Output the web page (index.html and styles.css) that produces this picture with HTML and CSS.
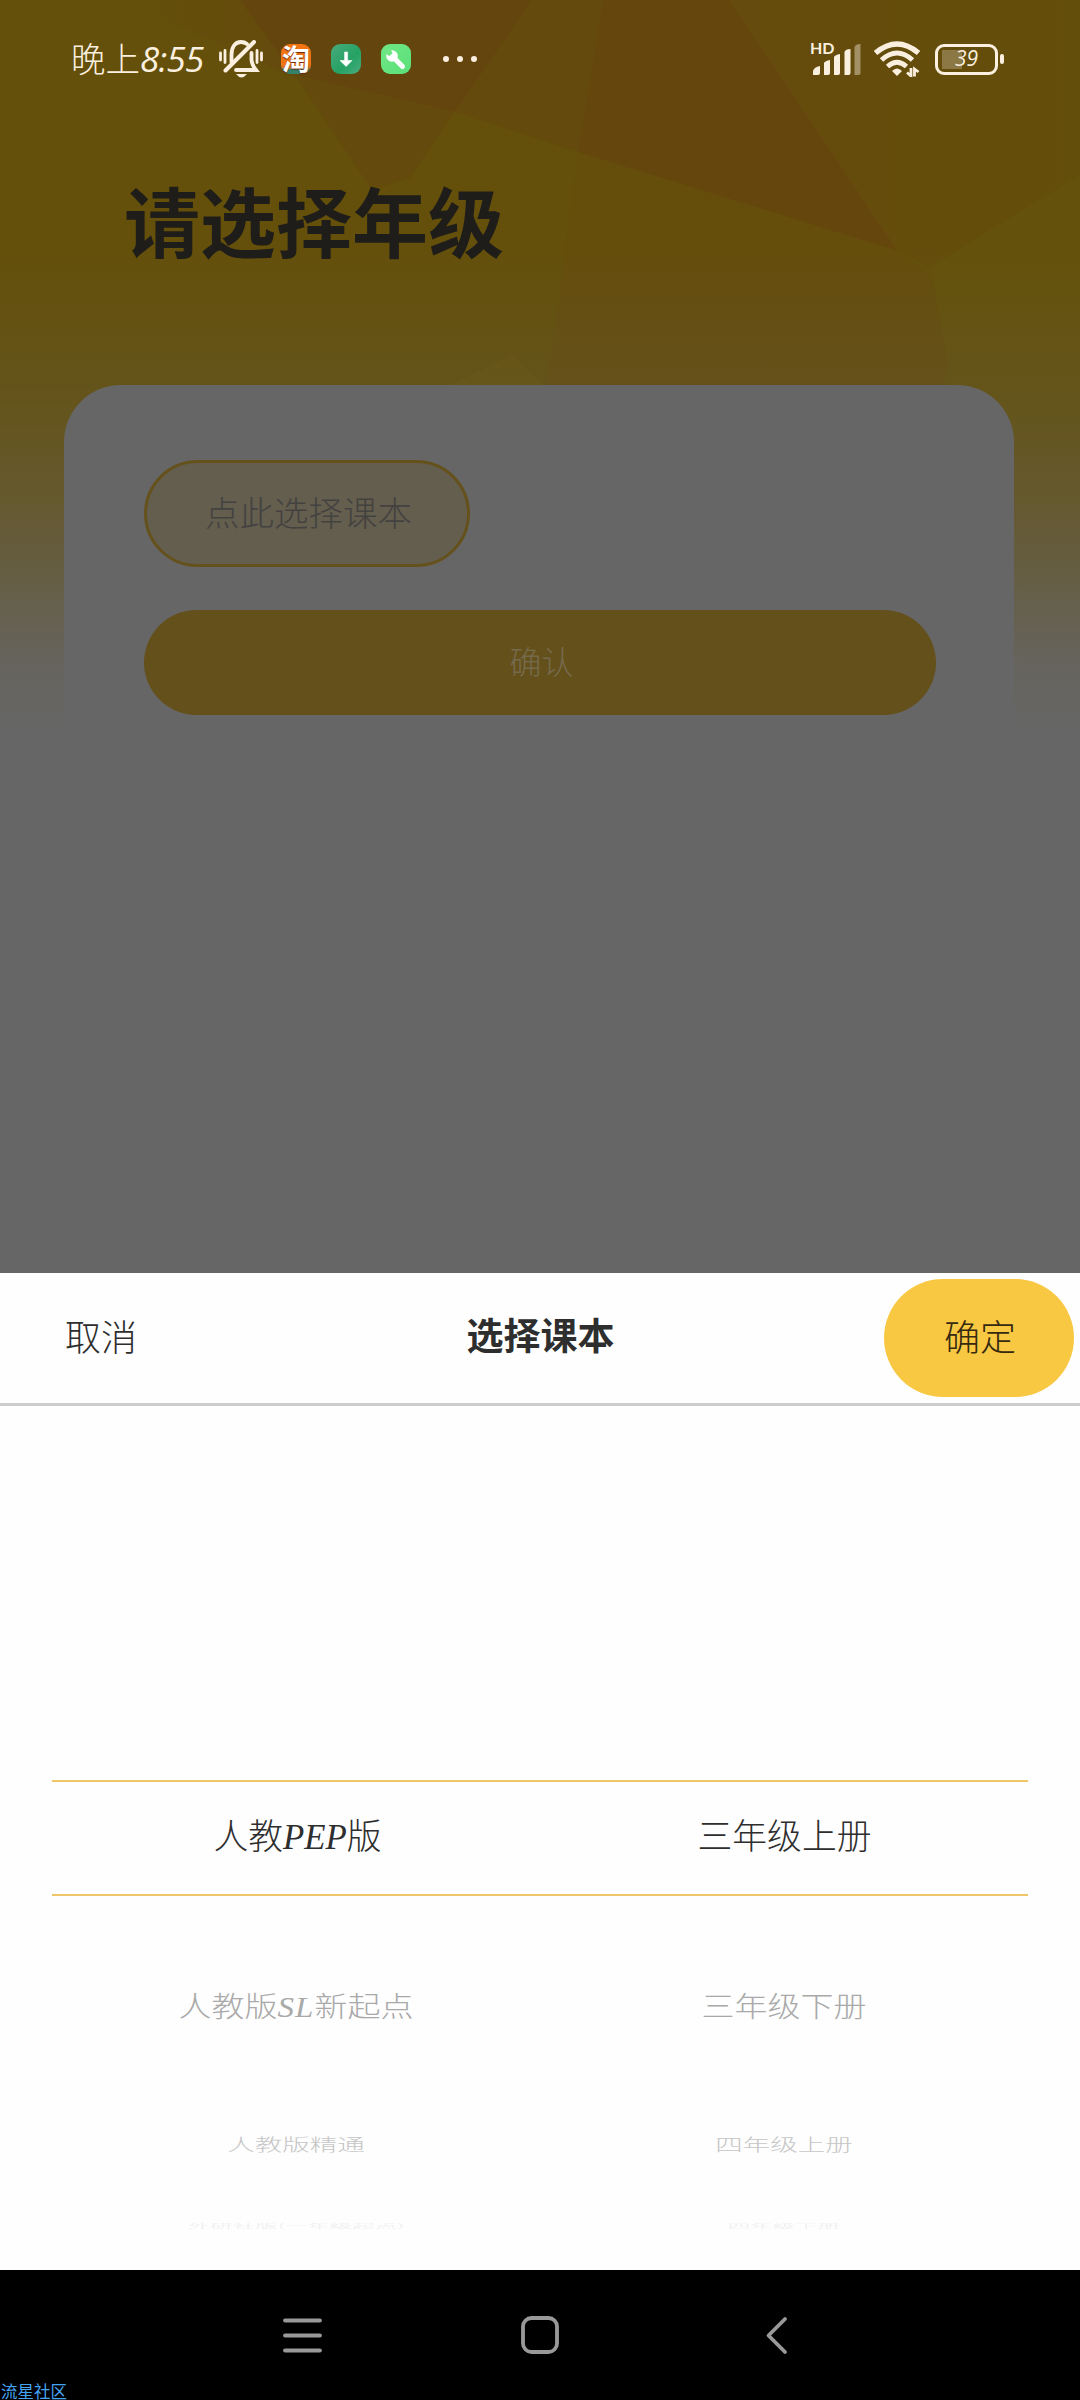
FILE: index.html
```html
<!DOCTYPE html>
<html lang="zh-CN">
<head>
<meta charset="utf-8">
<title>请选择年级</title>
<link rel="stylesheet" href="styles.css">
</head>
<body>
<div class="screen">
  <main class="page">
    <svg class="backdrop" viewBox="0 0 1080 730" aria-hidden="true">
      <defs>
        <linearGradient id="fade" x1="0" y1="0" x2="0" y2="1">
          <stop offset=".34" stop-color="#666" stop-opacity="0"/>
          <stop offset=".53" stop-color="#666" stop-opacity=".16"/>
          <stop offset=".68" stop-color="#666" stop-opacity=".38"/>
          <stop offset=".82" stop-color="#666" stop-opacity=".7"/>
          <stop offset=".91" stop-color="#666" stop-opacity=".9"/>
          <stop offset="1" stop-color="#666"/>
        </linearGradient>
        <linearGradient id="flank" x1="0" y1="0" x2="1" y2="0">
          <stop offset="0" stop-color="#654b0d"/>
          <stop offset="1" stop-color="#644e0b"/>
        </linearGradient>
        <linearGradient id="blend" x1="0" y1="0" x2="1" y2="0">
          <stop offset="0" stop-color="#64500b"/>
          <stop offset="1" stop-color="#654a0d"/>
        </linearGradient>
      </defs>
      <rect width="1080" height="730" fill="#64500b"/>
      <path d="M120 0H240L300 80Z" fill="url(#blend)"/>
      <path d="M240 0H532L455 112L295 75Z" fill="#65450e"/>
      <path d="M295 75L455 112L410 178L372 190Z" fill="#654a0d"/>
      <path d="M532 0H603L578 152L455 112Z" fill="#654a0d"/>
      <path d="M603 0H730L898 251L578 152Z" fill="#65470e"/>
      <path d="M730 0H1080V175L930 267L898 251Z" fill="url(#flank)"/>
      <path d="M578 152L898 251L960 300L940 400H545Z" fill="#654d0c"/>
      <path d="M930 267L1080 175V430H960Z" fill="#64510b"/>
      <path d="M512 355L550 390H440Z" fill="#67530c"/>
      <rect width="1080" height="730" fill="url(#fade)"/>
    </svg>

    <header class="status">
      <div class="status-left">
        <span class="clock">晚上<i>8:55</i></span>
        <svg class="bell" viewBox="0 0 44 38" fill="none" stroke="#fbefdf" stroke-linecap="round">
          <path d="M1.500 13v7M6 10.500v12M38 10.500v12M42.500 13v7" stroke-width="2.800"/>
          <path d="M12.500 22V15C12.500 7 16 2 22 2Q25.500 2 28 4M32.500 13V20Q33 25 37 30H17" stroke-width="3.800"/>
          <path d="M6.500 30.500L35 2" stroke-width="4"/>
          <path d="M17 34h11q-5.500 7-11 0z" fill="#fbefdf" stroke="none"/>
        </svg>
        <span class="app app-shop">淘</span>
        <svg class="app" viewBox="0 0 30 30">
          <defs><linearGradient id="dl" x1="0" y1="0" x2="1" y2="1"><stop stop-color="#49aa7c"/><stop offset=".6" stop-color="#25a264"/><stop offset="1" stop-color="#4bad82"/></linearGradient></defs>
          <rect width="30" height="30" rx="9" fill="url(#dl)"/>
          <path d="M13.600 8h3v8.500h4.400L15.100 22.500 9 16.500h4.600z" fill="#fff" stroke="#fff" stroke-linejoin="round" stroke-width=".6"/>
        </svg>
        <svg class="app" viewBox="0 0 30 30">
          <defs><linearGradient id="tool" x1="0" y1="0" x2="1" y2="1"><stop stop-color="#6fe784"/><stop offset="1" stop-color="#5be07a"/></linearGradient></defs>
          <rect width="30" height="30" rx="9" fill="url(#tool)"/>
          <path d="M12.500 13.500L21.500 22.500" stroke="#fff" stroke-width="5" stroke-linecap="round"/>
          <circle cx="11" cy="12" r="5.800" fill="#fff"/>
          <path d="M5 4.500h4.500l2 5-3 2.500L4 9.500z" fill="#6fe784"/>
        </svg>
        <svg class="more" viewBox="0 0 34 6" fill="#fbefdf"><circle cx="3" cy="3" r="3"/><circle cx="17" cy="3" r="3"/><circle cx="31" cy="3" r="3"/></svg>
      </div>
      <div class="status-right">
        <div class="cell">
          <svg class="bars" viewBox="0 0 50 32" fill="#fbefdf">
            <path d="M2 32v-4q1-4 7-5v7q0 2-2 2zM13 32V20q1-2 6-3v13q0 2-2 2zM23 32V14q1-2 6-3v19q0 2-2 2zM33.500 32V9q1-3 6-3v24q0 2-2 2z"/>
            <path d="M43.500 32V4q1-3 6-3v29q0 2-2 2z" opacity=".42"/>
          </svg>
          <span class="hd">HD</span>
        </div>
        <svg class="wifi" viewBox="0 0 46 36" fill="none" stroke="#fbefdf">
          <path d="M1.500 12Q23-6 44.500 12" stroke-width="5.400"/>
          <path d="M7.500 19Q23 5 38.500 19" stroke-width="5"/>
          <path d="M13.500 25.500Q23 17 32.500 25.500" stroke-width="4.800"/>
          <path d="M18 30Q23 25 28 30L23 35Z" fill="#fbefdf" stroke="none"/>
          <path d="M37 27V35L33 31.500M40.500 35.500V28L44.500 31" stroke-width="2.800"/>
        </svg>
        <div class="battery"><span class="battery-body">39</span><span class="battery-tip"></span></div>
      </div>
    </header>

    <h1 class="title">请选择年级</h1>

    <section class="card">
      <button class="picker">点此选择课本</button>
      <button class="submit">确认</button>
    </section>
  </main>

  <section class="sheet">
    <div class="sheet-bar">
      <span class="cancel">取消</span>
      <h2 class="sheet-title">选择课本</h2>
      <button class="ok">确定</button>
    </div>
    <div class="wheel">
      <div class="row row-selected"><span>人教<i>PEP</i>版</span><span>三年级上册</span></div>
      <div class="row row-near"><span>人教版<i>SL</i>新起点</span><span>三年级下册</span></div>
      <div class="row row-far"><span>人教版精通</span><span>四年级上册</span></div>
      <div class="row row-edge"><span>外研社版(一年级起点)</span><span>四年级下册</span></div>
    </div>
  </section>

  <footer class="nav">
    <svg viewBox="0 0 40 40"><path d="M3 5.500h35M3 20.500h35M3 35.500h35"/></svg>
    <svg viewBox="0 0 40 40"><rect x="3" y="3" width="34" height="34" rx="8.500"/></svg>
    <svg viewBox="0 0 40 40"><path d="M28 4L11.500 20.500L28 37"/></svg>
    <span class="mark">流星社区</span>
  </footer>
</div>
</body>
</html>
```
FILE: styles.css
```css
* { box-sizing: border-box; }

body {
  margin: 0;
  font-family: "Noto Sans CJK SC", sans-serif;
  font-weight: 300;
  color: #2e2e2e;
}

button { border: 0; padding: 0; font: inherit; white-space: nowrap; }
h1, h2 { margin: 0; }

.screen {
  width: 1080px;
  height: 2400px;
  display: flex;
  flex-direction: column;
  overflow: hidden;
}

.page {
  position: relative;
  z-index: 0;
  height: 1273px;
  background: #666;
}

.backdrop {
  position: absolute;
  inset: 0 0 auto 0;
  width: 1080px;
  height: 730px;
  z-index: -1;
}

/* status bar */
.status {
  height: 118px;
  padding: 0 76px 0 71px;
  display: flex;
  align-items: center;
  justify-content: space-between;
  color: #fbefdf;
}
.status-left, .status-right, .battery { display: flex; align-items: center; }
.clock {
  width: 148px;
  padding-bottom: 3px;
  font-size: 34.500px;
  line-height: 40px;
  white-space: nowrap;
}
.clock i {
  font-family: "Open Sans", sans-serif;
  font-size: 35px;
  font-weight: 400;
  letter-spacing: -.800px;
}
.bell { width: 44px; height: 38px; margin-right: 18px; }
.app { width: 30px; height: 30px; margin-right: 20px; }
.app-shop {
  border-radius: 9px;
  background: linear-gradient(#f07512 0 70%, #a87b42 84%, #33826a 85%);
  color: #fff;
  font-size: 28px;
  font-weight: 700;
  line-height: 28px;
  text-align: center;
  text-shadow: 0 1px 1px #692306;
}
.more { width: 34px; height: 6px; margin-left: 12px; }

.cell { position: relative; width: 50px; height: 32px; margin-right: 13px; }
.bars { display: block; width: 50px; height: 32px; }
.hd {
  position: absolute;
  left: -1px;
  top: -3px;
  font: 700 16px/16px Lato, sans-serif;
}
.wifi { width: 46px; height: 36px; margin-right: 15px; }
.battery { gap: 2px; }
.battery-body {
  width: 63px;
  height: 31px;
  border: 3px solid #fbefdf;
  border-radius: 9px;
  background: linear-gradient(#8b7845, #8b7845) 4px 3px / 20px 19px no-repeat;
  font: italic 400 21px/23px "Open Sans", sans-serif;
  text-align: center;
}
.battery-tip { width: 4px; height: 10px; border-radius: 2px; background: #fbefdf; }

/* dimmed form */
.title {
  height: 267px;
  padding-left: 124px;
  font-size: 76px;
  font-weight: 700;
  line-height: 202px;
  color: #1f1d19;
}
.card {
  width: 950px;
  height: 600px;
  margin-left: 64px;
  padding: 75px 78px 0 80px;
  border-radius: 57px 57px 0 0;
  background: #666;
  display: flex;
  flex-direction: column;
  align-items: flex-start;
  gap: 43px;
}
.picker {
  width: 326px;
  height: 107px;
  padding: 0 0 6px 3px;
  border: 3px solid #65511c;
  border-radius: 54px;
  background: #635e4e;
  color: #444240;
  font-size: 34.500px;
}
.submit {
  width: 792px;
  height: 105px;
  padding: 0 0 6px 3px;
  border-radius: 53px;
  background: #64501a;
  color: #766a4d;
  font-size: 32px;
}

/* bottom sheet */
.sheet { height: 997px; background: #fefefe; }
.sheet-bar {
  height: 133px;
  padding: 0 6px 3px 65px;
  border-bottom: 3px solid #ccc;
  display: grid;
  grid-template-columns: 1fr 148px 1fr;
  align-items: center;
  font-size: 36px;
}
.cancel { padding-bottom: 4px; }
.sheet-title {
  margin-left: -29px;
  padding-bottom: 5px;
  font-size: 37px;
  font-weight: 700;
  white-space: nowrap;
}
.ok {
  justify-self: end;
  width: 190px;
  height: 118px;
  margin-top: 3px;
  padding: 0 0 6px 2px;
  border-radius: 59px;
  background: #f9c842;
  color: #35290f;
}

.wheel { padding: 374px 52px 0; }
.row {
  display: grid;
  grid-template-columns: 1fr 1fr;
  align-items: center;
  justify-items: center;
  white-space: nowrap;
}
.row i { font-family: "Liberation Serif", serif; }
.row-selected {
  height: 116px;
  padding: 0 0 8px 2px;
  border-top: 2px solid #f0c668;
  border-bottom: 2px solid #f0c668;
  font-size: 34.800px;
}
.row-near { height: 220px; padding-bottom: 3px; font-size: 33px; color: #a9a9a9; }
.row-near i { letter-spacing: 1px; }
.row-near span { transform: scaleY(.86); }
.row-far { height: 58px; padding-bottom: 2px; font-size: 27.500px; color: #c6c6c6; }
.row-far span { transform: scaleY(.62); }
.row-edge { height: 104px; padding-bottom: 2px; font-size: 22.500px; color: #ededed; }
.row-edge span { transform: scaleY(.27); }

/* system navigation */
.nav {
  position: relative;
  height: 130px;
  padding: 0 283px 0 282px;
  background: #000;
  display: flex;
  align-items: center;
  justify-content: space-between;
}
.nav svg {
  width: 40px;
  height: 40px;
  fill: none;
  stroke: #999;
  stroke-width: 3.800;
  stroke-linecap: round;
  stroke-linejoin: round;
}
.mark {
  position: absolute;
  left: 1px;
  bottom: 0;
  font-size: 16.500px;
  font-weight: 400;
  line-height: 18px;
  color: #45a5f5;
}
```
